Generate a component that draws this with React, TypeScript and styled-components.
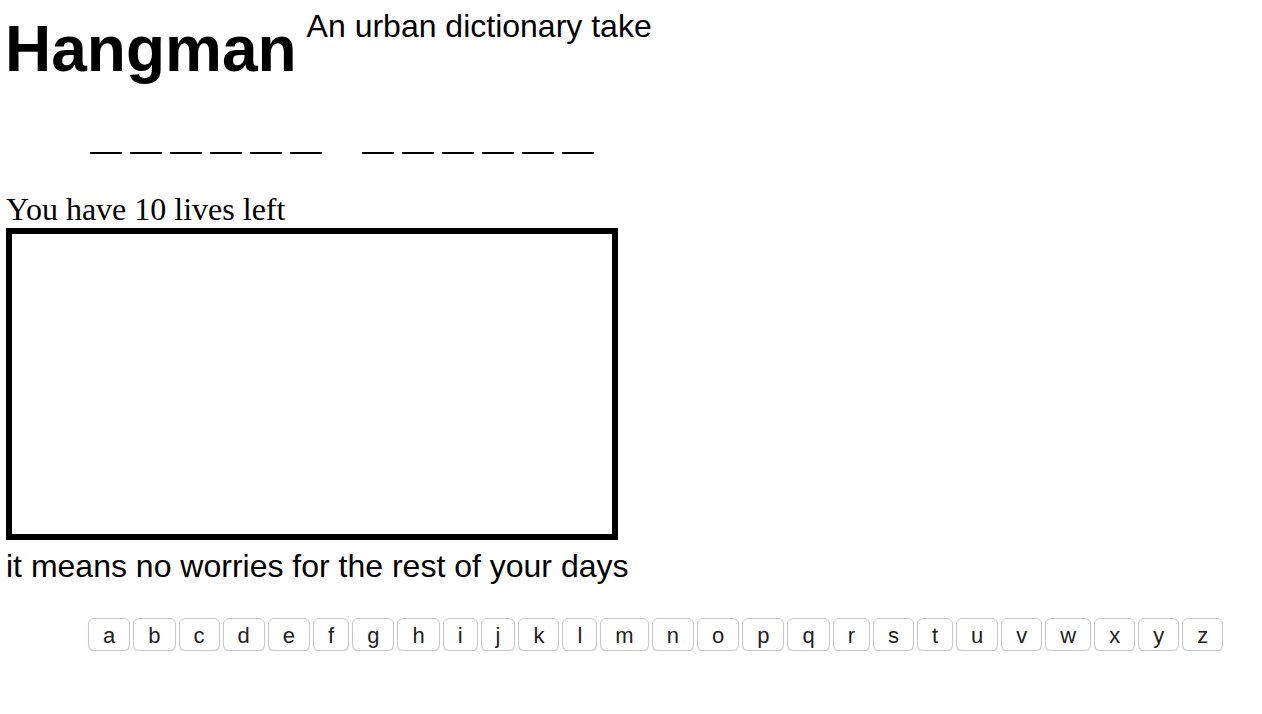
import React from 'react';
import styled, {createGlobalStyle} from 'styled-components';

const GlobalStyle = createGlobalStyle`
  html, body {
    margin: 0;
    padding: 0;
    background: #ffffff;
    color: #000000;
  }
  body {
    font-family: "Liberation Serif", "Times New Roman", serif;
  }
`

const ALPHABET = 'abcdefghijklmnopqrstuvwxyz'.split('');
const WORDS = ['hakuna', 'matata'];

export default function App() {
    return (
        <Page>
            <GlobalStyle/>
            <Header>
                <Title>Hangman</Title>
                <Subtitle>An urban dictionary take</Subtitle>
            </Header>

            <Puzzle>
                {WORDS.map((word, w) => (
                    <Word key={w}>
                        {word.split('').map((_, i) => (
                            <Blank key={i}>—</Blank>
                        ))}
                    </Word>
                ))}
            </Puzzle>

            <Lives>You have 10 lives left</Lives>
            <Gallows/>
            <Hint>it means no worries for the rest of your days</Hint>

            <Keyboard>
                {ALPHABET.map(letter => (
                    <LetterButton key={letter}>{letter}</LetterButton>
                ))}
            </Keyboard>
        </Page>
    );
}

const Page = styled.div`
  padding: 0 6px;
`

const Header = styled.header`
  display: flex;
  flex-direction: row;
  align-items: flex-start;
  gap: 10px;
`

const Title = styled.h1`
  margin: 12px 0 0 -1px;
  font-family: "Liberation Sans", Arial, sans-serif;
  font-weight: bold;
  font-size: 64px;
  line-height: 74px;
`

const Subtitle = styled.p`
  margin: 8px 0 0;
  font-family: "Liberation Sans", Arial, sans-serif;
  font-size: 32px;
  line-height: 37px;
`

const Puzzle = styled.div`
  display: flex;
  flex-direction: row;
  gap: 40px;
  padding: 46px 0 0 84px;
  height: 92px;
  box-sizing: border-box;
`

const Word = styled.div`
  display: flex;
  flex-direction: row;
  gap: 8px;
`

const Blank = styled.span`
  font-family: "Liberation Sans", Arial, sans-serif;
  font-size: 32px;
  line-height: 36px;
  width: 32px;
  overflow: hidden;
`

const Lives = styled.div`
  margin-top: 13px;
  font-size: 32px;
  line-height: 37px;
`

const Gallows = styled.div`
  width: 600px;
  height: 300px;
  border: 6px solid #000000;
`

const Hint = styled.p`
  margin: 8px 0 0;
  font-family: "Liberation Sans", Arial, sans-serif;
  font-size: 32px;
  line-height: 37px;
`

const Keyboard = styled.div`
  display: flex;
  flex-direction: row;
  gap: 3px;
  padding: 33px 0 0 82px;
`

const LetterButton = styled.button`
  height: 33px;
  padding: 2px 14px 0;
  background: #ffffff;
  border: 1px solid #c8c8c8;
  border-radius: 6px;
  box-shadow: 0 1px 1px rgba(0, 0, 0, 0.12);
  font-family: "Liberation Sans", Arial, sans-serif;
  font-size: 22px;
  color: #222222;
  cursor: pointer;
`
